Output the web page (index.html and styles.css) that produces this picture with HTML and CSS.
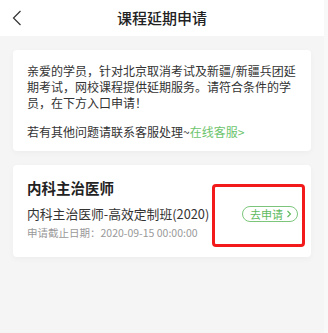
FILE: index.html
```html
<!DOCTYPE html>
<html lang="zh-CN">
<head>
<meta charset="utf-8">
<title>课程延期申请</title>
<link rel="stylesheet" href="styles.css">
</head>
<body>
<div class="page">
  <header class="topbar">
    <span class="back">
      <svg width="10" height="16" viewBox="0 0 10 16"><path d="M8.5 1 L1.5 8 L8.5 15" fill="none" stroke="#333" stroke-width="1.2"/></svg>
    </span>
    <h1 class="title">课程延期申请</h1>
  </header>
  <main class="content">
    <section class="card notice">
      <p class="para">亲爱的学员，针对北京取消考试及新疆/新疆兵团延期考试，网校课程提供延期服务。请符合条件的学员，在下方入口申请！</p>
      <p class="para second">若有其他问题请联系客服处理~<span class="link">在线客服&gt;</span></p>
    </section>
    <section class="card course">
      <h2 class="course-title">内科主治医师</h2>
      <div class="row">
        <div class="info">
          <div class="name">内科主治医师-高效定制班(2020)</div>
          <div class="date">申请截止日期：2020-09-15 00:00:00</div>
        </div>
        <span class="apply">去申请<svg width="6" height="8" viewBox="0 0 6 8"><path d="M1.5 1 L4.5 4 L1.5 7" fill="none" stroke="#5dba5d" stroke-width="1.1"/></svg></span>
      </div>
      <div class="mark"></div>
    </section>
  </main>
</div>
</body>
</html>
```
FILE: styles.css
```css
html {
  background: #f8f8f8;
}
body {
  margin: 0;
  font-family: "Noto Sans CJK SC", "Noto Sans", sans-serif;
  color: #333;
}
.page {
  width: 324px;
  height: 333px;
  background: #f5f5f5;
}
.topbar {
  height: 36px;
  background: #fff;
  display: flex;
  align-items: center;
  justify-content: center;
  position: relative;
}
.back {
  position: absolute;
  left: 12px;
  top: 10px;
  display: flex;
}
.title {
  margin: 0;
  font-size: 15px;
  font-weight: 500;
  color: #222;
  line-height: 20px;
}
.content {
  padding: 14px 13px 0 13px;
  display: flex;
  flex-direction: column;
  gap: 14px;
}
.card {
  background: #fff;
  border-radius: 4px;
  box-shadow: 0 2px 6px rgba(0, 0, 0, 0.035);
}
.notice {
  padding: 13px 14px 11px 14px;
}
.para {
  margin: 0;
  font-size: 12px;
  line-height: 16px;
  color: #333;
}
.second {
  margin-top: 13px;
}
.link {
  color: #6cc46c;
}
.course {
  padding: 13px 13px 13px 14px;
  position: relative;
  height: 66px;
}
.course-title {
  margin: 0;
  font-size: 14.5px;
  font-weight: 700;
  line-height: 20px;
  color: #222;
}
.row {
  display: flex;
  align-items: flex-start;
  justify-content: space-between;
  margin-top: 8px;
}
.name {
  font-size: 12.8px;
  line-height: 16px;
  color: #333;
}
.date {
  font-size: 10.5px;
  line-height: 14px;
  color: #999;
  margin-top: 4px;
}
.apply {
  display: flex;
  align-items: center;
  gap: 3px;
  height: 14px;
  padding: 0 5px 0 7px;
  border: 1px solid #7cc67c;
  border-radius: 8px;
  font-size: 11px;
  color: #5dba5d;
  line-height: 14px;
}
.mark {
  position: absolute;
  left: 199px;
  top: 19px;
  width: 87px;
  height: 57px;
  border: 3px solid #f21a1a;
  border-radius: 4px;
}
```
